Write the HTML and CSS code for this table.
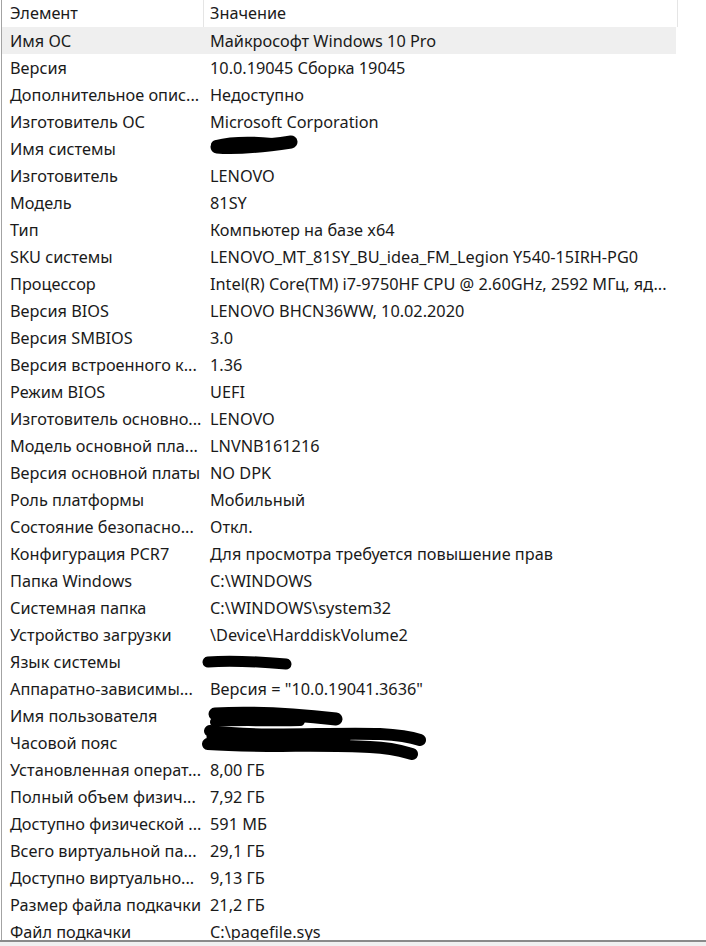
FILE: index.html
```html
<!DOCTYPE html>
<html lang="ru">
<head>
<meta charset="utf-8">
<title>Сведения о системе</title>
<link rel="stylesheet" href="styles.css">
</head>
<body>
<div class="window">
  <div class="list">
    <div class="head">
      <div class="hcell c1">Элемент</div>
      <div class="hcell c2">Значение</div>
      <div class="hcell c3"></div>
    </div>
    <div class="row sel"><div class="cell c1">Имя ОС</div><div class="cell c2">Майкрософт Windows 10 Pro</div></div>
    <div class="row"><div class="cell c1">Версия</div><div class="cell c2">10.0.19045 Сборка 19045</div></div>
    <div class="row"><div class="cell c1">Дополнительное опис...</div><div class="cell c2">Недоступно</div></div>
    <div class="row"><div class="cell c1">Изготовитель ОС</div><div class="cell c2">Microsoft Corporation</div></div>
    <div class="row"><div class="cell c1">Имя системы</div><div class="cell c2"></div></div>
    <div class="row"><div class="cell c1">Изготовитель</div><div class="cell c2">LENOVO</div></div>
    <div class="row"><div class="cell c1">Модель</div><div class="cell c2">81SY</div></div>
    <div class="row"><div class="cell c1">Тип</div><div class="cell c2">Компьютер на базе x64</div></div>
    <div class="row"><div class="cell c1">SKU системы</div><div class="cell c2">LENOVO_MT_81SY_BU_idea_FM_Legion Y540-15IRH-PG0</div></div>
    <div class="row"><div class="cell c1">Процессор</div><div class="cell c2">Intel(R) Core(TM) i7-9750HF CPU @ 2.60GHz, 2592 МГц, яд...</div></div>
    <div class="row"><div class="cell c1">Версия BIOS</div><div class="cell c2">LENOVO BHCN36WW, 10.02.2020</div></div>
    <div class="row"><div class="cell c1">Версия SMBIOS</div><div class="cell c2">3.0</div></div>
    <div class="row"><div class="cell c1">Версия встроенного к...</div><div class="cell c2">1.36</div></div>
    <div class="row"><div class="cell c1">Режим BIOS</div><div class="cell c2">UEFI</div></div>
    <div class="row"><div class="cell c1">Изготовитель основно...</div><div class="cell c2">LENOVO</div></div>
    <div class="row"><div class="cell c1">Модель основной пла...</div><div class="cell c2">LNVNB161216</div></div>
    <div class="row"><div class="cell c1">Версия основной платы</div><div class="cell c2">NO DPK</div></div>
    <div class="row"><div class="cell c1">Роль платформы</div><div class="cell c2">Мобильный</div></div>
    <div class="row"><div class="cell c1">Состояние безопасно...</div><div class="cell c2">Откл.</div></div>
    <div class="row"><div class="cell c1">Конфигурация PCR7</div><div class="cell c2">Для просмотра требуется повышение прав</div></div>
    <div class="row"><div class="cell c1">Папка Windows</div><div class="cell c2">C:\WINDOWS</div></div>
    <div class="row"><div class="cell c1">Системная папка</div><div class="cell c2">C:\WINDOWS\system32</div></div>
    <div class="row"><div class="cell c1">Устройство загрузки</div><div class="cell c2">\Device\HarddiskVolume2</div></div>
    <div class="row"><div class="cell c1">Язык системы</div><div class="cell c2"></div></div>
    <div class="row"><div class="cell c1">Аппаратно-зависимы...</div><div class="cell c2">Версия = "10.0.19041.3636"</div></div>
    <div class="row"><div class="cell c1">Имя пользователя</div><div class="cell c2"></div></div>
    <div class="row"><div class="cell c1">Часовой пояс</div><div class="cell c2"></div></div>
    <div class="row"><div class="cell c1">Установленная операт...</div><div class="cell c2">8,00 ГБ</div></div>
    <div class="row"><div class="cell c1">Полный объем физич...</div><div class="cell c2">7,92 ГБ</div></div>
    <div class="row"><div class="cell c1">Доступно физической ...</div><div class="cell c2">591 МБ</div></div>
    <div class="row"><div class="cell c1">Всего виртуальной па...</div><div class="cell c2">29,1 ГБ</div></div>
    <div class="row"><div class="cell c1">Доступно виртуально...</div><div class="cell c2">9,13 ГБ</div></div>
    <div class="row"><div class="cell c1">Размер файла подкачки</div><div class="cell c2">21,2 ГБ</div></div>
    <div class="row last"><div class="cell c1">Файл подкачки</div><div class="cell c2">C:\pagefile.sys</div></div>
  </div>
  <div class="statusbar"></div>
  <svg class="scribbles" width="706" height="946" viewBox="0 0 706 946" aria-hidden="true">
    <g fill="none" stroke="#000" stroke-linecap="round" stroke-linejoin="round">
      <path d="M217 147 C240 149 264 146 291 142" stroke-width="13"/>
      <path d="M216 145 C232 141 252 141 272 143" stroke-width="10"/>
      <path d="M208 662 C232 660 262 662 286 664" stroke-width="11"/>
      <path d="M215 714 C250 712 300 715 336 719" stroke-width="13"/>
      <path d="M215 722 C240 720 270 722 300 721" stroke-width="10"/>
      <path d="M210 731 C260 738 330 732 380 734 C400 735 414 738 420 740" stroke-width="12"/>
      <path d="M208 744 C260 748 320 744 370 747 C395 748 405 752 412 754" stroke-width="12"/>
      <path d="M212 737 C250 741 300 738 345 739" stroke-width="11"/>
    </g>
  </svg>
</div>
</body>
</html>
```

FILE: styles.css
```css
html, body {
  margin: 0;
  padding: 0;
  background: #ffffff;
}

.window {
  position: relative;
  width: 706px;
  height: 946px;
  overflow: hidden;
  font-family: "Noto Sans", "Open Sans", sans-serif;
  font-size: 16.3px;
  color: #1a1a1a;
}

.list {
  height: 940px;
  margin-left: 1px;
  border-left: 1px solid #a3a3a3;
  background: #ffffff;
  overflow: hidden;
}

.head,
.row {
  display: flex;
  height: 27px;
  align-items: stretch;
}

.row.last {
  height: 22px;
}

.hcell {
  height: 27px;
  padding-top: 1px;
  line-height: 25px;
  box-sizing: border-box;
  border-right: 1px solid #e5e5e5;
  white-space: nowrap;
}

.head .c1 { width: 202px; padding-left: 8px; }
.head .c2 { width: 474px; padding-left: 6px; }
.head .c3 { width: 2px; border-right: none; }

.row.sel {
  width: 674px;
  background: #efefef;
}

.cell {
  white-space: nowrap;
  padding-top: 2px;
  line-height: 25px;
}

.row .c1 {
  width: 200px;
  flex: none;
  padding-left: 8px;
  box-sizing: border-box;
  overflow: hidden;
}

.row .c2 {
  padding-left: 8px;
}

.statusbar {
  height: 6px;
  border-top: 2px solid #8a8a8a;
  background: #f0f0f0;
}

.scribbles {
  position: absolute;
  left: 0;
  top: 0;
  pointer-events: none;
}
```
